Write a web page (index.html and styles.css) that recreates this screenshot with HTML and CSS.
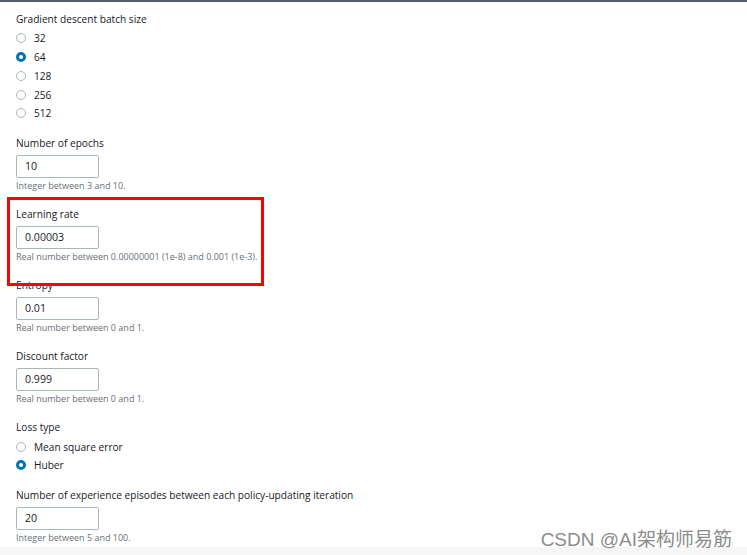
FILE: index.html
```html
<!DOCTYPE html>
<html>
<head>
<meta charset="utf-8">
<link rel="stylesheet" href="styles.css">
</head>
<body>
<div class="page">
  <div class="field radio-field">
    <div class="label">Gradient descent batch size</div>
    <div class="radios">
      <div class="radio-row"><span class="radio"></span><span class="rtext">32</span></div>
      <div class="radio-row"><span class="radio checked"></span><span class="rtext">64</span></div>
      <div class="radio-row"><span class="radio"></span><span class="rtext">128</span></div>
      <div class="radio-row"><span class="radio"></span><span class="rtext">256</span></div>
      <div class="radio-row"><span class="radio"></span><span class="rtext">512</span></div>
    </div>
  </div>
  <div class="field">
    <div class="label">Number of epochs</div>
    <div class="input">10</div>
    <div class="hint">Integer between 3 and 10.</div>
  </div>
  <div class="field">
    <div class="label">Learning rate</div>
    <div class="input">0.00003</div>
    <div class="hint">Real number between 0.00000001 (1e-8) and 0.001 (1e-3).</div>
  </div>
  <div class="field">
    <div class="label">Entropy</div>
    <div class="input">0.01</div>
    <div class="hint">Real number between 0 and 1.</div>
  </div>
  <div class="field">
    <div class="label">Discount factor</div>
    <div class="input">0.999</div>
    <div class="hint">Real number between 0 and 1.</div>
  </div>
  <div class="field radio-field">
    <div class="label">Loss type</div>
    <div class="radios tight">
      <div class="radio-row"><span class="radio"></span><span class="rtext">Mean square error</span></div>
      <div class="radio-row"><span class="radio checked"></span><span class="rtext">Huber</span></div>
    </div>
  </div>
  <div class="field">
    <div class="label">Number of experience episodes between each policy-updating iteration</div>
    <div class="input">20</div>
    <div class="hint">Integer between 5 and 100.</div>
  </div>
  <div class="highlight"></div>
  <div class="watermark">CSDN @AI架构师易筋</div>
</div>
</body>
</html>
```
FILE: styles.css
```css
* { box-sizing: border-box; }
html, body { margin: 0; padding: 0; }
body {
  background: #ffffff;
  font-family: "Open Sans", "Noto Sans", sans-serif;
  color: #16191f;
  width: 747px;
  height: 555px;
  overflow: hidden;
}
.page {
  position: relative;
  height: 555px;
  border-top: 2px solid #545b64;
  padding: 9px 0 0 16px;
  background: linear-gradient(to bottom, #ffffff 0, #ffffff 545px, #f6f6f6 545px);
}
.field {
  display: flex;
  flex-direction: column;
  align-items: flex-start;
}
.label {
  font-size: 10.15px;
  line-height: 16px;
  height: 16px;
  white-space: nowrap;
}
.input {
  margin-top: 4px;
  width: 83px;
  height: 23px;
  border: 1px solid #aab7b8;
  border-radius: 2px;
  padding-left: 8px;
  font-size: 10.6px;
  line-height: 21px;
}
.hint {
  margin-top: 2px;
  font-size: 9px;
  line-height: 12px;
  color: #687078;
  margin-bottom: 14px;
  white-space: nowrap;
}
.radios {
  margin-top: 2px;
  margin-bottom: 12.5px;
}
.radio-row {
  display: flex;
  align-items: center;
  height: 18.75px;
}
.radios.tight .radio-row { height: 18px; }
.radios.tight .radio-row:first-child { height: 19px; }
.radio {
  width: 10px;
  height: 10px;
  border-radius: 50%;
  border: 1px solid #aab7b8;
  background: #fff;
  flex: none;
}
.radio.checked {
  border: 3px solid #0073bb;
}
.rtext {
  margin-left: 8px;
  font-size: 10.15px;
}
.highlight {
  position: absolute;
  left: 7px;
  top: 195px;
  width: 257px;
  height: 89px;
  border: 3px solid #ff0000;
}
.watermark {
  position: absolute;
  right: 15px;
  top: 522px;
  font-family: "Liberation Sans", "Noto Sans CJK SC", sans-serif;
  font-size: 19px;
  color: #8c8c8c;
  text-shadow: 0 0 1px #ffffff;
  white-space: nowrap;
}
```
